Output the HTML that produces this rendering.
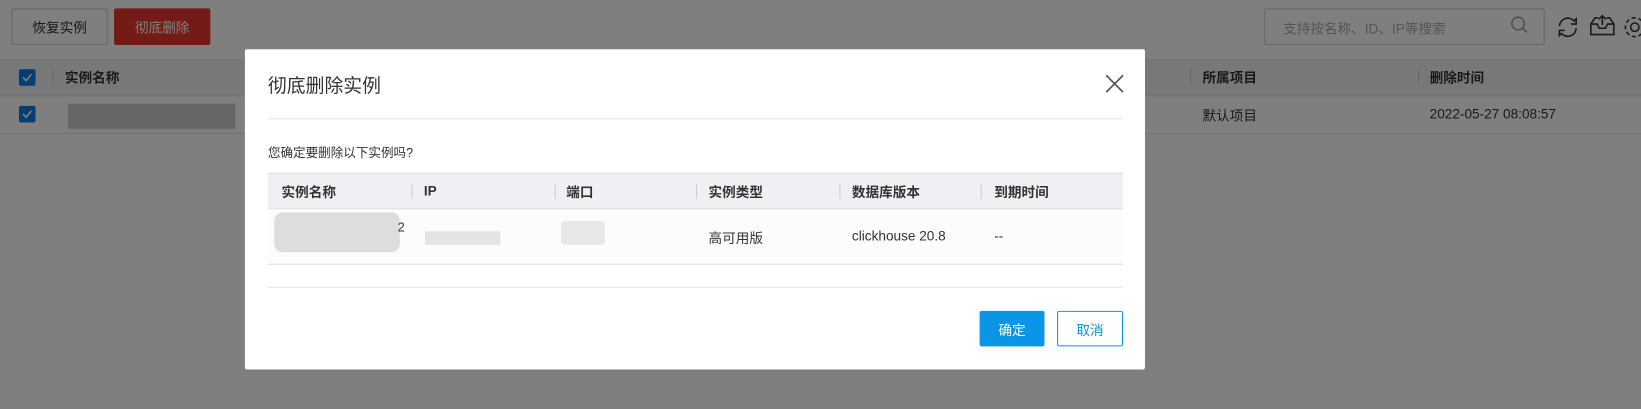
<!DOCTYPE html>
<html><head><meta charset="utf-8"><style>
*{box-sizing:border-box;margin:0;padding:0}
body{width:1641px;height:409px;position:relative;overflow:hidden;background:#fff;font-family:"Liberation Sans","Noto Sans CJK SC",sans-serif;font-size:13px;color:#333}
#w{position:absolute;left:0;top:0;width:1568px;height:391px;transform:scale(1.0466);transform-origin:0 0}
.a{position:absolute}
.btn{position:absolute;display:flex;align-items:center;justify-content:center;border-radius:2px;font-size:13px}
.blur{position:absolute;background:#ddd;border-radius:8px}
</style></head><body><div id="w">
<div class="btn" style="left:11px;top:8px;width:92px;height:35px;border:1px solid #ccc;color:#333">恢复实例</div>
<div class="btn" style="left:109px;top:8px;width:92px;height:35px;background:#e8372d;color:#fff">彻底删除</div>
<div class="a" style="left:1208px;top:8px;width:268px;height:35px;border:1px solid #ccc;border-radius:2px"></div>
<div class="a" style="left:1226px;top:17px;color:#aaa;font-size:13px">支持按名称、ID、IP等搜索</div>
<svg class="a" style="left:1443px;top:15px" width="18" height="18"><circle cx="7.5" cy="7.5" r="6" fill="none" stroke="#999" stroke-width="1.4"/><line x1="12" y1="12" x2="16" y2="16" stroke="#999" stroke-width="1.4"/></svg>
<svg class="a" style="left:1486px;top:14px" width="24" height="24" fill="none" stroke="#333" stroke-width="1.5"><path d="M4 11a8 8 0 0 1 14-5l2-2v5h-5"/><path d="M20 13a8 8 0 0 1-14 5l-2 2v-5h5"/></svg>
<svg class="a" style="left:1518px;top:12px" width="26" height="24" fill="none" stroke="#333" stroke-width="1.5"><path d="M2 11l4-6h3M17 5h3l4 6v10H2V11h6l2 4h6l2-4h6"/><path d="M13 12V3M9.5 6.5L13 3l3.5 3.5"/></svg>
<svg class="a" style="left:1550px;top:14px" width="22" height="24" fill="none" stroke="#333" stroke-width="1.5"><circle cx="12" cy="12" r="4"/><circle cx="12" cy="12" r="9" stroke-dasharray="4 2.5"/></svg>
<div class="a" style="left:0;top:57px;width:1568px;height:35px;background:#f1f1f5;border-top:1px solid #e5e5e5;border-bottom:1px solid #e5e5e5"></div>
<svg class="a" style="left:18px;top:66px" width="16" height="16"><rect width="16" height="16" rx="2" fill="#0c7ce0"/><path d="M4 8l3 3 5-6" fill="none" stroke="#fff" stroke-width="1.5"/></svg>
<div class="a" style="left:50px;top:66px;width:1px;height:14px;background:#ccc"></div>
<div class="a" style="left:62px;top:64px;font-weight:bold">实例名称</div>
<div class="a" style="left:1137px;top:66px;width:1px;height:14px;background:#ccc"></div>
<div class="a" style="left:1149px;top:64px;font-weight:bold">所属项目</div>
<div class="a" style="left:1355px;top:66px;width:1px;height:14px;background:#ccc"></div>
<div class="a" style="left:1366px;top:64px;font-weight:bold">删除时间</div>
<svg class="a" style="left:18px;top:101px" width="16" height="16"><rect width="16" height="16" rx="2" fill="#0c7ce0"/><path d="M4 8l3 3 5-6" fill="none" stroke="#fff" stroke-width="1.5"/></svg>
<div class="a" style="left:65px;top:99px;width:160px;height:24px;background:#ccc"></div>
<div class="a" style="left:1149px;top:100px">默认项目</div>
<div class="a" style="left:1366px;top:101px">2022-05-27 08:08:57</div>
<div class="a" style="left:0;top:127px;width:1568px;height:1px;background:#e5e5e5"></div>
<div class="a" style="left:0;top:0;width:1568px;height:391px;background:rgba(0,0,0,0.5)"></div>
<div class="a" style="left:234px;top:47px;width:860px;height:306px;background:#fff;border-radius:2px"></div>
<div class="a" style="left:256px;top:68px;font-size:18px;color:#333">彻底删除实例</div>
<svg class="a" style="left:1055px;top:70px" width="20" height="20" stroke="#555" stroke-width="1.6"><line x1="2" y1="2" x2="18" y2="18"/><line x1="18" y1="2" x2="2" y2="18"/></svg>
<div class="a" style="left:256px;top:113px;width:817px;height:1px;background:#e5e5e5"></div>
<div class="a" style="left:256px;top:137px;font-size:12px">您确定要删除以下实例吗?</div>
<div class="a" style="left:256px;top:165px;width:817px;height:35px;background:#f0f0f4;border-top:1px solid #e0e0e0;border-bottom:1px solid #e0e0e0"></div>
<div class="a" style="left:256px;top:200px;width:817px;height:53px;background:#fcfcfc;border-bottom:1px solid #e0e0e0"></div>
<div class="a" style="left:269px;top:173px;font-weight:bold">实例名称</div>
<div class="a" style="left:393px;top:176px;width:1px;height:14px;background:#ccc"></div>
<div class="a" style="left:405px;top:175px;font-weight:bold">IP</div>
<div class="a" style="left:530px;top:176px;width:1px;height:14px;background:#ccc"></div>
<div class="a" style="left:541px;top:173px;font-weight:bold">端口</div>
<div class="a" style="left:665px;top:176px;width:1px;height:14px;background:#ccc"></div>
<div class="a" style="left:677px;top:173px;font-weight:bold">实例类型</div>
<div class="a" style="left:802px;top:176px;width:1px;height:14px;background:#ccc"></div>
<div class="a" style="left:814px;top:173px;font-weight:bold">数据库版本</div>
<div class="a" style="left:937px;top:176px;width:1px;height:14px;background:#ccc"></div>
<div class="a" style="left:950px;top:173px;font-weight:bold">到期时间</div>
<div class="blur" style="left:262px;top:203px;width:120px;height:38px"></div>
<div class="a" style="left:380px;top:210px;font-size:12px">2</div>
<div class="a" style="left:406px;top:221px;width:72px;height:13px;background:#e4e4e4"></div>
<div class="a" style="left:536px;top:211px;width:42px;height:23px;background:#e8e8e8;border-radius:4px"></div>
<div class="a" style="left:677px;top:217px">高可用版</div>
<div class="a" style="left:814px;top:218px">clickhouse 20.8</div>
<div class="a" style="left:950px;top:218px">--</div>
<div class="a" style="left:256px;top:274px;width:817px;height:1px;background:#e5e5e5"></div>
<div class="btn" style="left:936px;top:297px;width:62px;height:34px;background:#0a95e6;color:#fff">确定</div>
<div class="btn" style="left:1010px;top:297px;width:63px;height:34px;border:1px solid #0a95e6;color:#0a95e6">取消</div>
</div></body></html>
